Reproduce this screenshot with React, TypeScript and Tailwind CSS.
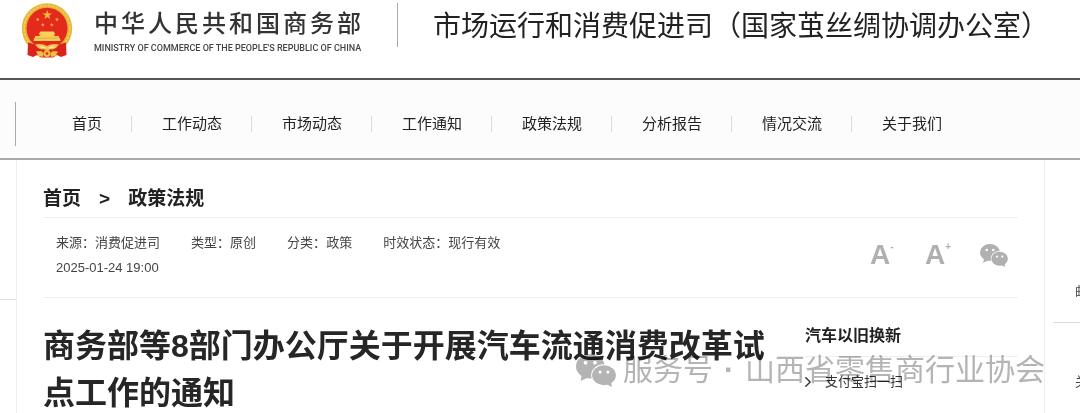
import React from 'react';
import { ChevronRight } from 'lucide-react';

const navItems = ['首页', '工作动态', '市场动态', '工作通知', '政策法规', '分析报告', '情况交流', '关于我们'];

const meta = [
  { label: '来源', value: '消费促进司' },
  { label: '类型', value: '原创' },
  { label: '分类', value: '政策' },
  { label: '时效状态', value: '现行有效' },
];

const STAR = 'M0 -5 L1.2 -1.6 L4.8 -1.5 L1.9 0.6 L2.9 4 L0 2 L-2.9 4 L-1.9 0.6 L-4.8 -1.5 L-1.2 -1.6 Z';

const Emblem: React.FC = () => (
  <svg viewBox="0 0 52 56" className="w-[52px] h-14 shrink-0" aria-hidden="true">
    {/* wheat ring */}
    <circle cx="26" cy="25.5" r="25.2" fill="#e6b437" />
    <circle cx="26" cy="25.5" r="22.9" fill="none" stroke="#f2cc55" strokeWidth="1.8" strokeDasharray="3 1" />
    <circle cx="26" cy="25.3" r="20.5" fill="#e42a1d" />
    {/* red drapes */}
    <path d="M7 39.5 L16 42 L26 44 L36 42 L45 39.5 L45.5 52 L40 54 L36 52 L32 54.5 L20 54.5 L16 52 L12 54 L6.5 52 Z" fill="#d9231b" />
    {/* tassels and cog wheel */}
    <path d="M14 41.5 Q21 40 26 43 Q31 40 38 41.5 Q36 45 31.5 46.5 Q29 45.5 26 48 Q23 45.5 20.5 46.5 Q16 45 14 41.5 Z" fill="#f0c54d" />
    <path d="M18 43.5 Q22 42.5 25 45 Q21 46 18 43.5 Z M34 43.5 Q30 42.5 27 45 Q31 46 34 43.5 Z" fill="#fae9b8" />
    <path d="M15 48.5 L20 48 L22.5 50 L22 54 L17.5 53 Z M37 48.5 L32 48 L29.5 50 L30 54 L34.5 53 Z" fill="#efc141" />
    <circle cx="26" cy="50.5" r="3.6" fill="#edbc3c" />
    <circle cx="26" cy="50.5" r="1.3" fill="#d9231b" />
    {/* gate tower */}
    <path d="M19.5 28.5 H32.5 L34 30.5 L33 33 H19 L18 30.5 Z" fill="#f7d15c" />
    <path d="M14 33 H38 V35 H39 L39.5 38 H12.5 L13 35 H14 Z" fill="#f5cd55" />
    <path d="M14.5 35.2 H37.5" stroke="#dd9a2b" strokeWidth="0.6" />
    <g fill="#f3bb3a">
      <path d={STAR} transform="translate(26.3 12)" />
      <path d={STAR} transform="translate(16.7 16.5) scale(0.42)" />
      <path d={STAR} transform="translate(36 16.5) scale(0.42)" />
      <path d={STAR} transform="translate(21.8 21.8) scale(0.42)" />
      <path d={STAR} transform="translate(30.8 21.8) scale(0.42)" />
    </g>
  </svg>
);

const WeChatIcon: React.FC<{ className?: string }> = ({ className }) => (
  <svg viewBox="0 0 28 23" className={className} fill="currentColor" aria-hidden="true">
    <ellipse cx="10" cy="8.6" rx="10" ry="8.5" />
    <path d="M4 14.5 L3.2 18.8 L8 16.5 Z" />
    <ellipse cx="19.6" cy="14.8" rx="9" ry="7.7" fill="#fff" />
    <ellipse cx="19.6" cy="14.8" rx="8.3" ry="7" />
    <path d="M21 21 L25.2 23 L24.4 19 Z" />
    <g fill="#fff">
      <circle cx="6.7" cy="6" r="1.3" />
      <circle cx="13.3" cy="6" r="1.3" />
      <circle cx="16.9" cy="12.6" r="1.1" />
      <circle cx="22.3" cy="12.6" r="1.1" />
    </g>
  </svg>
);

const Header: React.FC = () => (
  <header className="flex items-start h-20 pt-[3px] pl-[21px] border-b-2 border-[#555] bg-white whitespace-nowrap">
    <a href="#home" className="flex items-start gap-[21px] w-[376px] shrink-0">
      <Emblem />
      <div className="pt-1">
        <div className="text-[24px] leading-[34px] font-medium tracking-[3px] text-[#333]">中华人民共和国商务部</div>
        <div className="font-[Roboto,sans-serif] font-medium text-[9px] leading-[14px] text-[#444]">
          MINISTRY OF COMMERCE OF THE PEOPLE'S REPUBLIC OF CHINA
        </div>
      </div>
    </a>
    <div className="h-11 border-l border-[#aaa] pl-[35px]">
      <h1 className="text-[28px] leading-[48px] text-[#222]">市场运行和消费促进司（国家茧丝绸协调办公室）</h1>
    </div>
  </header>
);

const Nav: React.FC = () => (
  <nav className="h-20 flex items-center pt-[10px] bg-[#fcfcfc] border-b-2 border-[#aaa]">
    <div className="ml-[15px] h-11 pl-[26px] flex items-center border-l border-[#aaa]">
      {navItems.map((item, i) => (
        <a
          key={item}
          href={`#nav-${i}`}
          className="pl-[30px] pr-[29px] text-[15px] leading-4 text-[#222] whitespace-nowrap border-r border-[#ddd] last:border-r-0 hover:text-red-700"
        >
          {item}
        </a>
      ))}
    </div>
  </nav>
);

const Tools: React.FC = () => (
  <div className="flex items-center gap-[30px] pr-[10px] pb-[5px] text-[#b0b0b0]">
    <button type="button" aria-label="缩小字号" className="flex items-start w-[25px]">
      <span className="text-[28px] leading-7 font-bold">A</span>
      <span className="text-[10px] leading-3 font-bold">-</span>
    </button>
    <button type="button" aria-label="放大字号" className="flex items-start w-[25px]">
      <span className="text-[28px] leading-7 font-bold">A</span>
      <span className="text-[10px] leading-3 font-bold">+</span>
    </button>
    <button type="button" aria-label="分享到微信">
      <WeChatIcon className="w-7 h-[23px]" />
    </button>
  </div>
);

const Article: React.FC = () => (
  <article className="flex-1 min-w-0 px-[26px] border-x border-[#eee]">
    <div className="flex items-center gap-[18px] pt-6 pb-[3px] text-[19px] leading-[30px] font-bold text-[#222] border-b border-[#eee]">
      <a href="#home">首页</a>
      <span>&gt;</span>
      <a href="#policy">政策法规</a>
    </div>

    <div className="flex items-center justify-between h-20 pl-[13px] border-b border-[#eee]">
      <div className="text-[13px] leading-[25px] text-[#444] pb-[5px]">
        <div className="flex gap-[31px]">
          {meta.map((m) => (
            <span key={m.label}>{m.label}：{m.value}</span>
          ))}
        </div>
        <time dateTime="2025-01-24T19:00">2025-01-24 19:00</time>
      </div>
      <Tools />
    </div>

    <div className="flex items-start justify-between gap-8 pt-[25px]">
      <h2 className="flex-1 text-[32px] leading-[47px] font-bold text-[#262626]">
        商务部等8部门办公厅关于开展汽车流通消费改革试点工作的通知
      </h2>
      <aside className="w-[213px] shrink-0">
        <h3 className="pb-2 text-[16px] leading-[25px] font-bold text-[#222] border-b border-[#eee]">汽车以旧换新</h3>
        <a href="#alipay" className="flex items-center gap-[14px] pt-3 text-[13px] leading-[25px] text-[#333]">
          <ChevronRight className="w-[6px] h-[10px] shrink-0" viewBox="8 5 8 14" strokeWidth={2} />
          支付宝扫一扫
        </a>
      </aside>
    </div>
  </article>
);

const Watermark: React.FC = () => (
  <div className="absolute top-[348px] right-[35px] flex items-center gap-[7px] text-[#b4b4b4] mix-blend-multiply pointer-events-none whitespace-nowrap">
    <WeChatIcon className="w-10 h-[33px]" />
    <div className="flex gap-[11px] text-[30px] leading-[44px]">
      <span>服务号</span>
      <span className="font-bold">·</span>
      <span>山西省零售商行业协会</span>
    </div>
  </div>
);

export default function App() {
  return (
    <div className="relative min-h-screen flex flex-col overflow-hidden bg-white font-['Liberation_Sans','Noto_Sans_CJK_SC',sans-serif]">
      <Header />
      <Nav />
      <main className="flex-1 flex">
        <div className="w-4 shrink-0">
          <div className="h-[140px] border-b border-[#ddd]" />
        </div>
        <Article />
        <div className="w-[35px] shrink-0 overflow-hidden pl-2 text-[13px] leading-[25px] text-[#444] whitespace-nowrap">
          <div className="pt-[119px] pb-[18px] pl-[22px] border-b border-[#ddd]">邮</div>
          <div className="pt-[46px] pl-[22px]">关</div>
        </div>
      </main>
      <Watermark />
    </div>
  );
}
